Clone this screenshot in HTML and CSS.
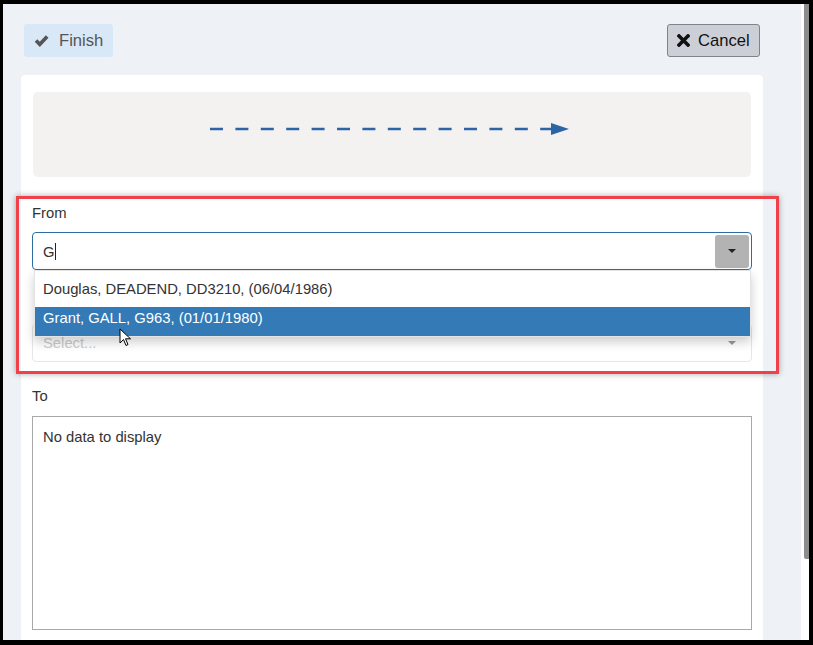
FILE: index.html
```html
<!DOCTYPE html>
<html>
<head>
<meta charset="utf-8">
<link rel="stylesheet" href="styles.css">
</head>
<body>
<div class="frame">
  <div class="screen">
    <div class="main">
      <div class="toolbar">
        <button class="btn btn-finish">
          <svg class="ico" width="15" height="13" viewBox="0 0 15 13"><polyline points="2,6.5 5.8,10.3 13.2,2.5" fill="none" stroke="#555" stroke-width="3.6" stroke-linejoin="miter"/></svg>
          <span>Finish</span>
        </button>
        <button class="btn btn-cancel">
          <svg class="ico" width="13" height="13" viewBox="0 0 13 13"><path d="M2 2 L11 11 M11 2 L2 11" stroke="#111" stroke-width="3.6" stroke-linecap="square"/></svg>
          <span>Cancel</span>
        </button>
      </div>
      <div class="card">
        <div class="diagram">
          <svg width="718" height="85" viewBox="0 0 718 85">
            <line x1="177" y1="37" x2="520" y2="37" stroke="#2c64a6" stroke-width="2.5" stroke-dasharray="13 12.4"/>
            <polygon points="518,31 536,37 518,43" fill="#2c64a6"/>
          </svg>
        </div>
        <div class="highlight">
          <label class="lbl">From</label>
          <div class="combo combo-active">
            <span class="val">G<span class="caret"></span></span>
            <span class="dd-btn"><span class="tri"></span></span>
          </div>
          <div class="combo combo-second">
            <span class="placeholder">Select...</span>
            <span class="tri tri-grey"></span>
          </div>
          <ul class="menu">
            <li>Douglas, DEADEND, DD3210, (06/04/1986)</li>
            <li class="sel">Grant, GALL, G963, (01/01/1980)</li>
          </ul>
          <svg class="cursor" width="13" height="20" viewBox="0 0 13 20"><path d="M1 1 L1 15 L4.5 11.5 L7 17.5 L9 16.5 L6.5 10.8 L11.5 10.8 Z" fill="#fff" stroke="#000" stroke-width="1"/></svg>
        </div>
        <label class="lbl lbl-to">To</label>
        <div class="grid-box">No data to display</div>
      </div>
    </div>
    <div class="scroll"><div class="thumb"></div></div>
  </div>
</div>
</body>
</html>
```

FILE: styles.css
```css
* { box-sizing: border-box; }
html, body { margin: 0; padding: 0; height: 100%; }
body {
  font-family: "Liberation Sans", Arial, sans-serif;
  font-size: 14.8px;
  color: #333;
  background: #000;
  overflow: hidden;
}
.frame {
  width: 813px;
  height: 645px;
  padding: 4px 4px 5px 3px;
  background: #000;
}
.screen {
  display: flex;
  height: 100%;
  overflow: hidden;
}
.main {
  flex: 1;
  background: #eef2f6;
  padding: 20px 38px 0 18px;
  overflow: hidden;
}
.scroll {
  width: 8px;
  background: #fff;
  display: flex;
  justify-content: flex-end;
}
.thumb {
  width: 5px;
  height: 555px;
  background: #8c8c8c;
  border-bottom-left-radius: 2px;
}
.toolbar {
  display: flex;
  justify-content: space-between;
  padding: 0 3px;
  margin-bottom: 18px;
}
.btn {
  display: flex;
  align-items: center;
  height: 33px;
  border-radius: 3px;
  font-family: "Liberation Sans", Arial, sans-serif;
  font-size: 16.6px;
  padding: 0;
}
.btn-finish {
  width: 89px;
  background: #d8e8f7;
  border: none;
  color: #555;
  padding-left: 10px;
}
.btn-finish .ico { margin-right: 10px; }
.btn-cancel {
  width: 93px;
  background: #ccd0d6;
  border: 1px solid #808489;
  color: #111;
  padding-left: 9px;
}
.btn-cancel .ico { margin-right: 8px; }
.card {
  background: #fff;
  border-radius: 4px 4px 0 0;
  padding: 17px 11px 30px;
  height: 600px;
}
.diagram {
  height: 85px;
  margin: 0 1px;
  background: #f3f2f1;
  border-radius: 5px;
}
.diagram svg { display: block; }
.highlight {
  position: relative;
  margin: 19px -27px 0 -16px;
  padding: 4px 24px 0 13px;
  border: 3px solid #f0404a;
  box-shadow: 0 0 6px rgba(0,0,0,0.35);
  height: 178px;
}
.lbl {
  display: block;
  line-height: 20px;
  height: 20px;
  color: #333;
}
.combo {
  position: relative;
  height: 38px;
  border-radius: 4px;
  display: flex;
  align-items: center;
}
.combo-active {
  margin-top: 9px;
  border: 1px solid #2e6da4;
  padding: 0 2px 0 10px;
}
.val { flex: 1; color: #333; }
.caret {
  display: inline-block;
  width: 1px;
  height: 17px;
  background: #222;
  vertical-align: -3px;
}
.dd-btn {
  width: 34px;
  height: 33px;
  background: #b3b3b3;
  border-radius: 3px;
  display: flex;
  align-items: center;
  justify-content: center;
}
.tri {
  width: 0; height: 0;
  border-left: 4px solid transparent;
  border-right: 4px solid transparent;
  border-top: 4px solid #222;
}
.combo-second {
  margin-top: 54px;
  border: 1px solid #e6e6e6;
  padding: 0 15px 0 10px;
  justify-content: space-between;
}
.placeholder { color: #ccc; }
.tri-grey { border-top-color: #999; }
.menu {
  position: absolute;
  left: 15px;
  right: 25px;
  top: 71px;
  margin: 0;
  padding: 0;
  list-style: none;
  background: #fff;
  border: 1px solid #e4e4e4;
  box-shadow: 0 5px 10px rgba(0,0,0,0.2);
}
.menu li {
  height: 36px;
  line-height: 36px;
  padding-left: 8px;
  color: #333;
}
.menu li.sel {
  height: 29px;
  line-height: 22px;
  background: #337ab7;
  color: #fff;
}
.cursor {
  position: absolute;
  left: 100px;
  top: 129px;
}
.lbl-to { margin-top: 12px; }
.grid-box {
  margin-top: 10px;
  height: 214px;
  border: 1px solid #a8a8a8;
  padding: 12px 10px;
  color: #333;
}
```
